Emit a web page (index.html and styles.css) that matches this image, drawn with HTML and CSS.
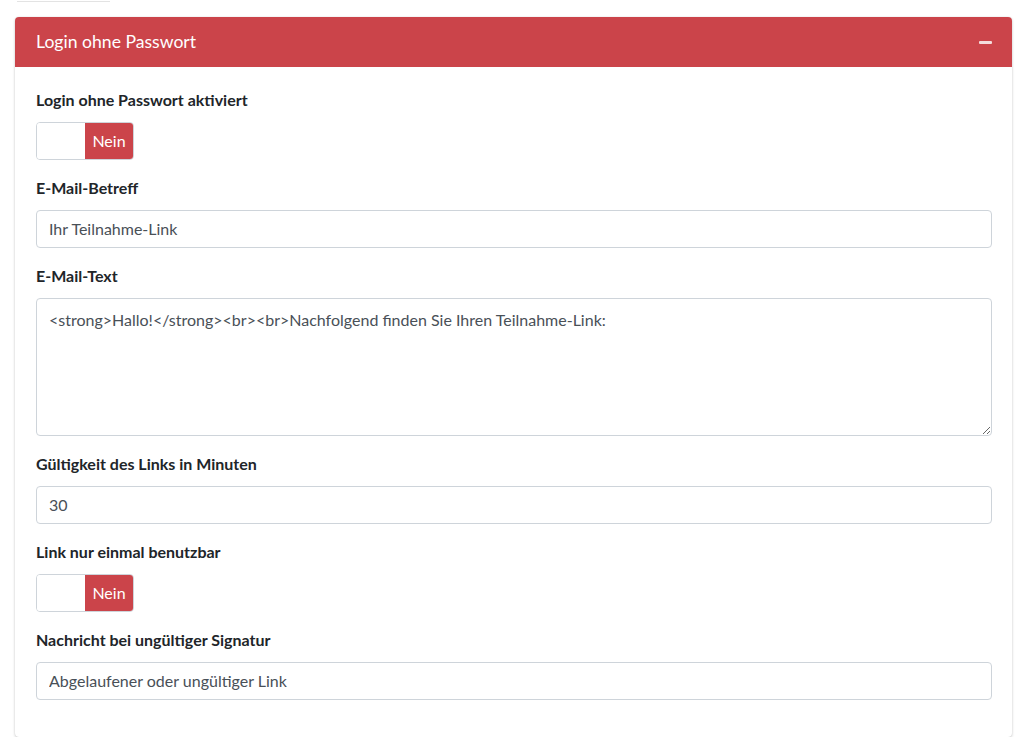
FILE: index.html
```html
<!DOCTYPE html>
<html lang="de">
<head>
<meta charset="utf-8">
<link rel="stylesheet" href="styles.css">
</head>
<body>
<div class="top-stub"></div>
<div class="card">
  <div class="card-header">
    <h3 class="card-title">Login ohne Passwort</h3>
    <button class="collapse-btn" aria-label="Einklappen"><span class="minus"></span></button>
  </div>
  <div class="card-body">
    <div class="form-group">
      <label class="form-label">Login ohne Passwort aktiviert</label>
      <div class="toggle"><span class="toggle-handle"></span><span class="toggle-off">Nein</span></div>
    </div>
    <div class="form-group">
      <label class="form-label">E-Mail-Betreff</label>
      <input class="form-control" type="text" value="Ihr Teilnahme-Link">
    </div>
    <div class="form-group">
      <label class="form-label">E-Mail-Text</label>
      <textarea class="form-control textarea">&lt;strong&gt;Hallo!&lt;/strong&gt;&lt;br&gt;&lt;br&gt;Nachfolgend finden Sie Ihren Teilnahme-Link:</textarea>
    </div>
    <div class="form-group">
      <label class="form-label">Gültigkeit des Links in Minuten</label>
      <input class="form-control" type="text" value="30">
    </div>
    <div class="form-group">
      <label class="form-label">Link nur einmal benutzbar</label>
      <div class="toggle"><span class="toggle-handle"></span><span class="toggle-off">Nein</span></div>
    </div>
    <div class="form-group last">
      <label class="form-label">Nachricht bei ungültiger Signatur</label>
      <input class="form-control" type="text" value="Abgelaufener oder ungültiger Link">
    </div>
  </div>
</div>
</body>
</html>
```
FILE: styles.css
```css
* { box-sizing: border-box; }
html, body { margin: 0; padding: 0; background: #fff; }
body {
  font-family: "Source Sans Pro", Lato, "Liberation Sans", sans-serif;
  color: #212529;
  font-size: 16px;
  padding: 0 12px 0 15px;
}
.top-stub {
  margin-left: 2px;
  width: 93px;
  height: 2px;
  border-bottom: 1px solid #e3e3e3;
  margin-bottom: 15px;
}
.card {
  width: 997px;
  background: #fff;
  border-radius: 4px;
  box-shadow: 0 0 1px rgba(0,0,0,.125), 0 1px 3px rgba(0,0,0,.2);
}
.card-header {
  background: #cb444a;
  color: #fff;
  height: 50px;
  display: flex;
  align-items: center;
  justify-content: space-between;
  padding: 0 20px 0 21px;
  border-radius: 4px 4px 0 0;
}
.card-title {
  margin: 0;
  font-size: 17.6px;
  font-weight: 400;
  line-height: 1.2;
  padding-bottom: 1px;
}
.collapse-btn {
  background: none;
  border: 0;
  padding: 0;
  width: 14px;
  height: 14px;
  display: flex;
  align-items: center;
  justify-content: center;
}
.minus {
  display: block;
  width: 13px;
  height: 3px;
  background: #f4dcdd;
  border-radius: 1px;
}
.card-body {
  padding: 21px 20px 37px 21px;
}
.form-group { margin-bottom: 16.5px; }
.form-group.last { margin-bottom: 0; }
.form-label {
  display: block;
  font-weight: 700;
  line-height: 24px;
  margin-bottom: 9.5px;
}
.toggle {
  display: flex;
  width: 98px;
  height: 38px;
  border: 1px solid #ced4da;
  border-radius: 4px;
  overflow: hidden;
}
.toggle-handle {
  width: 48px;
  background: #fff;
}
.toggle-off {
  flex: 1;
  background: #cb444a;
  color: #fff;
  display: flex;
  align-items: center;
  justify-content: center;
  font-size: 16px;
}
.form-control {
  display: block;
  width: 100%;
  height: 38px;
  padding: 6px 12px;
  font-family: inherit;
  font-size: 16px;
  color: #495057;
  background: #fff;
  border: 1px solid #ced4da;
  border-radius: 4px;
  outline: none;
}
.textarea {
  height: 138px;
  line-height: 24px;
  padding-top: 9px;
  resize: vertical;
}
```
